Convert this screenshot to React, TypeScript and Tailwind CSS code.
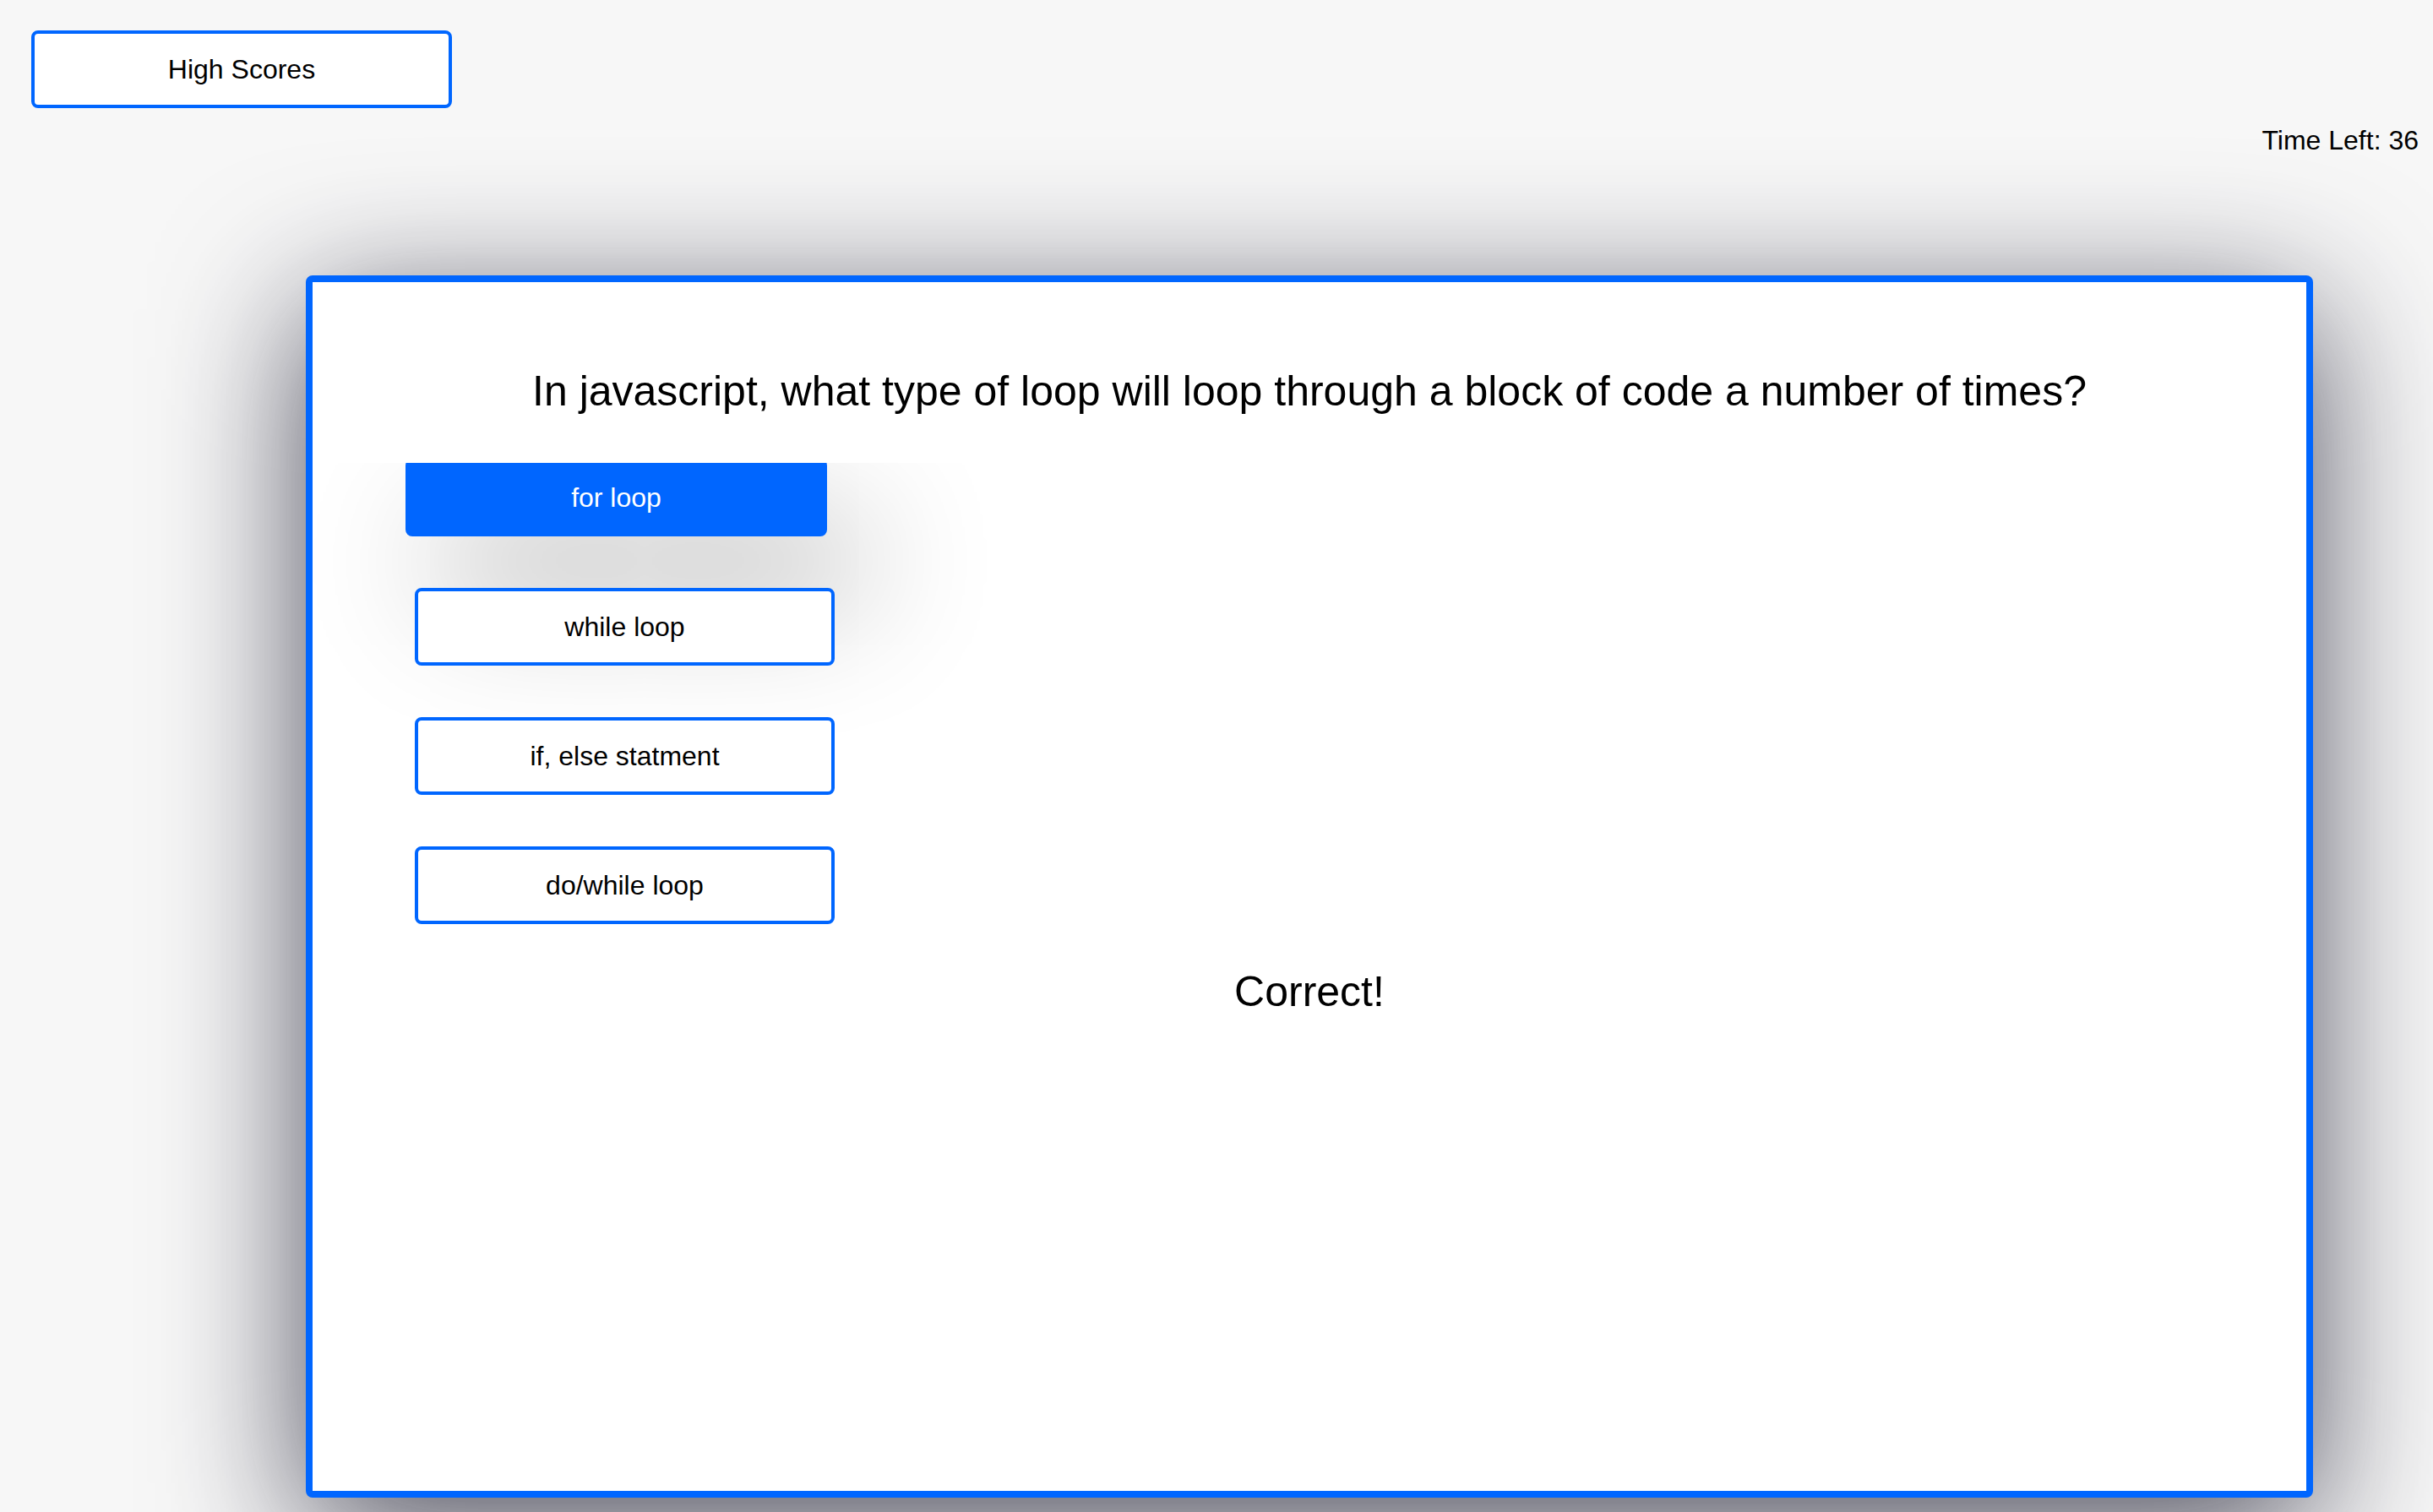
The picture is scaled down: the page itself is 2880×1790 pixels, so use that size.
import React from 'react';

const answers = ['for loop', 'while loop', 'if, else statment', 'do/while loop'];

const App: React.FC = () => {
  const picked = 0;

  return (
    <div className="min-h-[1790px] bg-[#f7f7f7] text-black font-['Liberation_Sans',Arial,sans-serif] overflow-hidden">
      {/* Header */}
      <div className="pt-[36px] pl-[37px]">
        <button className="w-[498px] h-[92px] bg-white border-4 border-[#0066ff] rounded-[8px] text-[32px] text-black">
          High Scores
        </button>
      </div>
      <p className="mt-[20px] pr-[17px] text-right text-[32px] leading-[37px]">Time Left: 36</p>

      {/* Quiz card */}
      <div className="mt-[141px] ml-[362px] w-[2376px] h-[1447px] bg-white border-8 border-[#0066ff] rounded-[8px] shadow-[0_40px_170px_rgba(20,20,40,0.75)]">
        <h2 className="relative z-10 bg-white pt-[100px] pb-[56px] text-center text-[50px] leading-[58px] font-normal">
          In javascript, what type of loop will loop through a block of code a number of times?
        </h2>

        <div className="-mt-[5px] pl-[121px] flex flex-col gap-[61px]">
          {answers.map((a, i) =>
            i === picked ? (
              <button
                key={a}
                className="w-[499px] h-[92px] -ml-[11px] bg-[#0066ff] rounded-[8px] text-[32px] text-white shadow-[40px_75px_160px_rgba(0,0,0,0.3)]"
              >
                {a}
              </button>
            ) : (
              <button
                key={a}
                className="w-[497px] h-[92px] bg-white border-4 border-[#0066ff] rounded-[8px] text-[32px] text-black"
              >
                {a}
              </button>
            )
          )}
        </div>

        <p className="mt-[51px] text-center text-[50px] leading-[58px]">Correct!</p>
      </div>
    </div>
  );
};

export default App;
